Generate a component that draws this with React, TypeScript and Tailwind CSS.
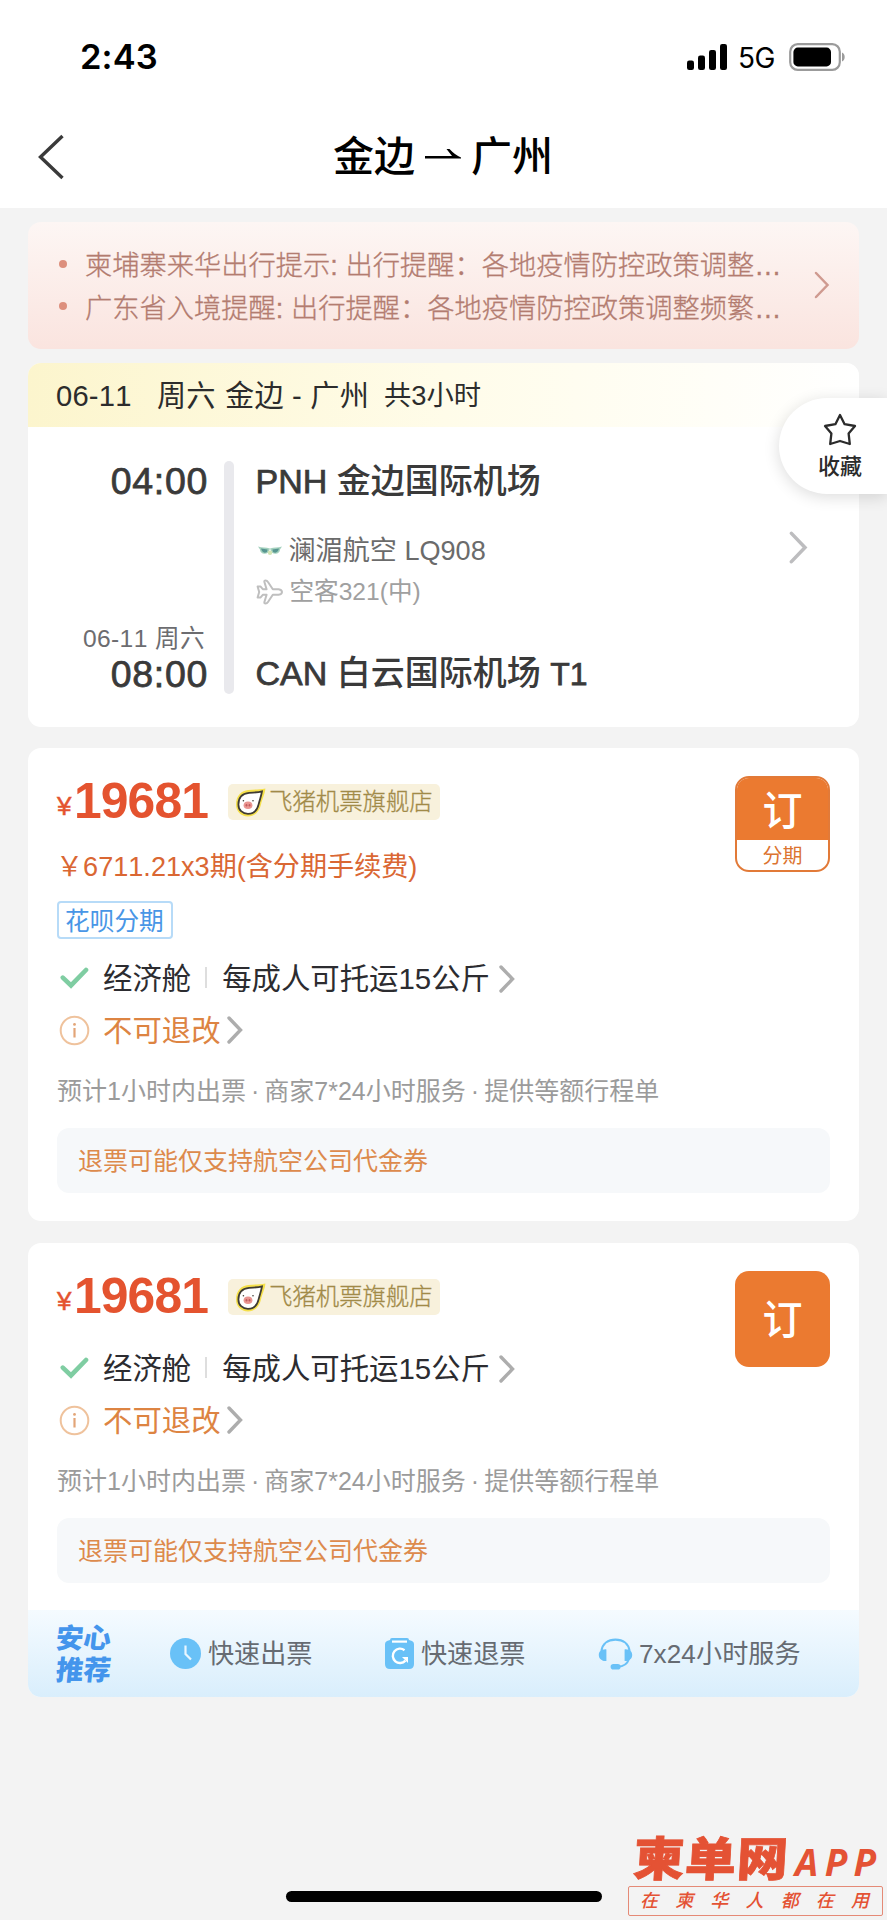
import type { ReactNode } from "react";

function Chevron({ className, stroke, width = 3.4 }: { className: string; stroke: string; width?: number }) {
  return (
    <svg className={className} viewBox="0 0 16 28" fill="none" stroke={stroke} strokeWidth={width} strokeLinecap="round" strokeLinejoin="miter">
      <path d="M2 2 L13.5 14 L2 26" />
    </svg>
  );
}

function StatusBar() {
  return (
    <div className="flex h-[114px] items-center pl-[80px] pr-[42px]">
      <span className="font-['Inter'] text-[34.5px] font-semibold leading-none tracking-[0.1px] text-black">2:43</span>
      <svg className="ml-auto h-[28px] w-[40px]" viewBox="0 0 40 28" fill="#000">
        <rect x="0" y="17.5" width="7" height="9.5" rx="2.2" />
        <rect x="11" y="12.5" width="7" height="14.5" rx="2.2" />
        <rect x="22" y="7" width="7" height="20" rx="2.2" />
        <rect x="33" y="1" width="7" height="26" rx="2.2" />
      </svg>
      <span className="ml-[11px] w-[51px] pt-[2px] font-['Inter'] text-[28px] leading-none tracking-[-0.5px] text-black">5G</span>
      <svg className="h-[28px] w-[56px]" viewBox="0 0 56 28">
        <rect x="1.2" y="1.2" width="49.6" height="25.6" rx="7.5" fill="none" stroke="#9b9b9b" strokeWidth="2.2" />
        <rect x="4.4" y="4.6" width="37.6" height="18.8" rx="4.4" fill="#000" />
        <path d="M53 9.5 C56.6 11 56.6 17 53 18.5 Z" fill="#9b9b9b" />
      </svg>
    </div>
  );
}

function TitleBar() {
  return (
    <div className="grid h-[94px] grid-cols-[333px_1fr] items-center pb-[8px]">
      <svg className="ml-[37px] h-[46px] w-[28px]" viewBox="0 0 28 46" fill="none" stroke="#3a3a3a" strokeWidth="3.4">
        <path d="M25.5 2 L3.5 23 L25.5 44" />
      </svg>
      <div className="flex items-center text-[41px] font-medium leading-[60px] text-black">
        <span>金边</span>
        <svg className="mb-[6px] ml-[10px] mr-[10px] h-[12px] w-[36px]" viewBox="0 0 36 12" fill="#000">
          <path d="M0 8 H27 L21.5 1 L24.5 1 Q30 7 36 9.4 V10.6 H0 Z" />
        </svg>
        <span>广州</span>
      </div>
    </div>
  );
}

function Notice() {
  return (
    <section className="flex h-[127px] items-center rounded-[13px] bg-linear-to-b from-[#fdf6f4] to-[#fae4df] pl-[31px] pr-[27px]">
      <ul className="w-[725px] pt-[4px] text-[27.25px] leading-[42.5px] text-[#b37c70]">
        {["柬埔寨来华出行提示: 出行提醒：各地疫情防控政策调整…", "广东省入境提醒: 出行提醒：各地疫情防控政策调整频繁…"].map((t) => (
          <li key={t} className="flex items-center whitespace-nowrap font-light [-webkit-text-stroke:0.3px_currentColor]">
            <span className="mb-[5px] mr-[18px] size-[8px] rounded-full bg-[#dd8f7d]" />
            {t}
          </li>
        ))}
      </ul>
      <Chevron className="mb-[2px] ml-[30px] h-[28px] w-[16px]" stroke="#cf9a90" width={2.5} />
    </section>
  );
}

function MaskIcon() {
  return (
    <svg className="mr-[7px] h-[10px] w-[24px]" viewBox="0 0 24 10">
      <path d="M0 .6 C4 1.8 8 1.4 12 2.6 L10.4 6.6 C6 9.4 2 7 2 3.6 Z" fill="#a3d0bd" />
      <path d="M24 .6 C20 1.8 16 1.4 12 2.6 L13.6 6.6 C18 9.4 22 7 22 3.6 Z" fill="#a3d0bd" />
      <path d="M3 2.6 L9.6 3.4 L9 6 C6 7.8 4 6 3 2.6 Z M21 2.6 L14.4 3.4 L15 6 C18 7.8 20 6 21 2.6 Z" fill="#569590" />
      <circle cx="12" cy="6.8" r="2.2" fill="#d3e4b4" />
    </svg>
  );
}

function PlaneIcon() {
  return (
    <svg className="mr-[7px] h-[26px] w-[27px]" viewBox="0 0 27 26" fill="none" stroke="#bfbfbf" strokeWidth="2" strokeLinejoin="round">
      <path d="M10.6 10.2 L8.4 3 Q8 1.4 9.6 1.4 Q11 1.4 12 3 L16.8 10.2 H22.6 Q26 10.8 26 13 Q26 15.2 22.6 15.8 H16.8 L12 23 Q11 24.6 9.6 24.6 Q8 24.6 8.4 23 L10.6 15.8 H6.8 L4.4 18.6 H1.6 L3.2 13 L1.6 7.4 H4.4 L6.8 10.2 Z" />
    </svg>
  );
}

const medium = "font-medium [-webkit-text-stroke:0.75px_currentColor]";

function FlightCard() {
  return (
    <section className="mt-[14px] h-[364px] rounded-[13px] bg-white">
      <header className="flex h-[64px] items-center whitespace-pre rounded-t-[13px] bg-linear-to-r from-[#fcf5cd] via-[#fffce9] to-white pl-[28px] pt-[3px] text-[29.2px] text-[#2c2c2c]">
        <span className="w-[101px] tracking-[0.2px]">06-11</span>
        <span className="w-[68px]">周六</span>
        <span className="w-[159px] tracking-[0.2px]">金边 - 广州</span>
        <span className="text-[27.3px]">共3小时</span>
      </header>
      <div className="flex pt-[34px]">
        <div className="flex h-[233px] w-[181px] flex-col items-end text-[#3a3a3a]">
          <span className={`pr-[1px] text-[37.5px] leading-[40px] tracking-[0.7px] ${medium}`}>04:00</span>
          <span className="mt-auto pr-[4px] text-[24.6px] leading-[30px] tracking-[0.4px] text-[#6c6c70]">06-11 周六</span>
          <span className={`pr-[1px] text-[37.5px] leading-[40px] tracking-[0.7px] ${medium}`}>08:00</span>
        </div>
        <div className="ml-[15px] h-[233px] w-[9.5px] rounded-full bg-[#e9e9ed]" />
        <div className="ml-[22px] flex h-[233px] w-[533px] flex-col whitespace-nowrap text-[#3a3a3a]">
          <span className="text-[34px] font-medium leading-[40px]">
            <span className={medium}>PNH</span> 金边国际机场
          </span>
          <span className="mt-[30px] flex items-center pl-[2px] text-[27.1px] leading-[40px] text-[#6b6b6b]">
            <MaskIcon />
            澜湄航空 LQ908
          </span>
          <span className="flex items-center text-[24.6px] leading-[42px] text-[#a0a0a0]">
            <PlaneIcon />
            空客321(中)
          </span>
          <span className="mt-auto text-[34px] font-medium leading-[39px]">
            <span className={medium}>CAN</span> 白云国际机场 <span className={`text-[32px] ${medium}`}>T1</span>
          </span>
        </div>
        <Chevron className="mt-[70px] h-[33px] w-[19px]" stroke="#bdbdbf" width={3} />
      </div>
    </section>
  );
}

function FavoriteTab() {
  return (
    <button className="absolute right-0 top-[398px] flex h-[96px] w-[108px] flex-col items-center rounded-l-full bg-white pl-[14px] pt-[15px] text-[#2b2b2b] shadow-[0_3px_16px_rgba(0,0,0,0.14)]">
      <svg className="h-[33px] w-[34px]" viewBox="0 0 34 33" fill="none" stroke="currentColor" strokeWidth="2.3" strokeLinejoin="round">
        <path d="M17 2 L21.6 11.2 L32 13 L25.6 20.4 L26.8 31 L17 28 L7.2 31 L8.4 20.4 L2 13 L12.4 11.2 Z" />
      </svg>
      <span className="mt-[7px] text-[22px] font-medium leading-[28px]">收藏</span>
    </button>
  );
}

function PigIcon() {
  return (
    <svg className="h-[32px] w-[31px]" viewBox="0 0 31 32">
      <path d="M1 18.5 C1 9 7 4.6 13 4 C20 3.4 25 3.4 30.4 2.4 C30 8 27.4 12 26 18.6 C24.4 26.4 19 30.4 13 30.4 C6 30.4 1 25.4 1 18.5 Z" fill="#f5e04b" />
      <path d="M3.4 18.4 C3.4 11 8 7.4 14 6.8 C19 6.4 23 6.6 27 5.4 C26.4 9.4 24.8 13.4 23.6 18.4 C22.2 24.6 18 27.8 13 27.8 C7.4 27.8 3.4 24 3.4 18.4 Z" fill="#fff" stroke="#3f3b33" strokeWidth="1.8" />
      <ellipse cx="13" cy="19.2" rx="4.4" ry="3.8" fill="#ea9590" />
      <ellipse cx="11.5" cy="19.2" rx=".9" ry="1.3" fill="#c25a5c" />
      <ellipse cx="14.5" cy="19.2" rx=".9" ry="1.3" fill="#c25a5c" />
      <circle cx="8.4" cy="14.8" r=".8" fill="#3f3b33" />
      <circle cx="18" cy="14.8" r=".8" fill="#3f3b33" />
    </svg>
  );
}

function PriceLine() {
  return (
    <div className="flex h-[37px] items-center">
      <span className="w-[17px] pt-[9px] text-[26px] leading-none text-[#e4532f] [-webkit-text-stroke:0.5px_currentColor]">¥</span>
      <span className="w-[154px] pt-px text-[49.8px] font-bold leading-none tracking-[-0.9px] text-[#e4532f]">19681</span>
      <span className="flex h-[36px] w-[212px] items-center rounded-[5px] bg-[#f8f1dc] pl-[7px] text-[23.4px] font-light leading-none text-[#a18a48]">
        <PigIcon />
        <span className="ml-[3px] pt-[2px] [-webkit-text-stroke:0.3px_currentColor]">飞猪机票旗舰店</span>
      </span>
    </div>
  );
}

function OfferDetails() {
  return (
    <>
      <div className="flex h-[53px] items-center text-[29.4px] text-[#2c2c30]">
        <svg className="ml-[3px] mr-[14px] h-[22px] w-[29px]" viewBox="0 0 29 22" fill="none" stroke="#7fcda2" strokeWidth="4.6" strokeLinecap="round">
          <path d="M2.8 10.6 L11 18.4 L26 3" />
        </svg>
        <span className="pt-[3px]">经济舱</span>
        <span className="ml-[14px] mr-[15px] h-[21px] w-[2px] bg-[#dedede]" />
        <span className="pt-[3px]">每成人可托运15公斤</span>
        <Chevron className="ml-[9px] mt-[2px] h-[28px] w-[16px]" stroke="#adadad" />
      </div>
      <div className="flex h-[52px] items-center text-[29.4px] text-[#dd8442]">
        <svg className="ml-[2px] mr-[13px] size-[31px]" viewBox="0 0 31 31" fill="none" stroke="#efc29c" strokeWidth="2">
          <circle cx="15.5" cy="15.5" r="13.8" />
          <path d="M15.5 13 V22.5" stroke="#e3a577" strokeWidth="2.2" />
          <circle cx="15.5" cy="9.4" r="1.4" fill="#e3a577" stroke="none" />
        </svg>
        <span className="pt-[2px]">不可退改</span>
        <Chevron className="ml-[6px] h-[28px] w-[16px]" stroke="#adadad" />
      </div>
      <p className="mt-[15px] h-[40px] whitespace-nowrap text-[25px] leading-[41px] text-[#9b9b9b] [word-spacing:-1.9px]">
        预计1小时内出票 · 商家7*24小时服务 · 提供等额行程单
      </p>
      <p className="mt-[17px] h-[65px] w-[773px] rounded-[12px] bg-[#f6f8fa] pl-[21px] text-[25px] leading-[67px] text-[#dd8a4c]">
        退票可能仅支持航空公司代金券
      </p>
    </>
  );
}

function OfferCard({ className, button, children }: { className: string; button: ReactNode; children: ReactNode }) {
  return (
    <section className={`grid grid-cols-[678px_95px] content-start rounded-[13px] bg-white pl-[29px] pt-[28px] ${className}`}>
      <div className="pt-[7px]">{children}</div>
      {button}
    </section>
  );
}

function SafeStrip() {
  return (
    <footer className="-ml-[29px] mt-[27px] flex h-[87px] w-[831px] items-center rounded-b-[13px] bg-linear-to-b from-[#f5fbff] to-[#d9eefc] text-[26.1px] text-[#666b72]">
      <div className="ml-[28px] w-[114px] pt-[3px] text-[27.5px] font-extrabold leading-[32px] text-[#4495ec]">
        <div className="-skew-x-6">安心</div>
        <div className="-skew-x-6">推荐</div>
      </div>
      <svg className="mr-[7px] size-[31px]" viewBox="0 0 31 31">
        <circle cx="15.5" cy="15.5" r="15.5" fill="#69c1f7" />
        <path d="M15.5 7.5 V16 L21 21.5" fill="none" stroke="#e8f6ff" strokeWidth="2.2" />
      </svg>
      <span className="w-[177px] pt-[3px]">快速出票</span>
      <svg className="mr-[7px] h-[31px] w-[29px]" viewBox="0 0 29 31">
        <path d="M5 2 Q5 0 7 0 H22 Q24 0 24 2 L27 3 Q29 4 29 6 V26 Q29 31 24 31 H5 Q0 31 0 26 V6 Q0 4 2 3 Z" fill="#69c1f7" />
        <path d="M7 3.6 H22" stroke="#fff" strokeWidth="2.2" />
        <path d="M19.5 12.2 A7.2 7.2 0 1 0 20.4 22.6" fill="none" stroke="#fff" strokeWidth="2.4" />
        <path d="M17 19 H23 V25 Z" fill="#fff" />
      </svg>
      <span className="w-[177px] pt-[3px]">快速退票</span>
      <svg className="mr-[6px] h-[32px] w-[35px]" viewBox="0 0 35 32" fill="none" stroke="#69c1f7" strokeWidth="2.1">
        <path d="M3.4 13 C4.4 5.6 10 1.6 17.5 1.6 C25 1.6 30.6 5.6 31.6 13" />
        <path d="M8.4 11.4 V23 C3 23.4 .8 20 .8 17 C.8 14 3 11 8.4 11.4 Z M26.6 11.4 V23 C32 23.4 34.2 20 34.2 17 C34.2 14 32 11 26.6 11.4 Z" fill="#69c1f7" stroke="none" />
        <path d="M31 21 C29 26.6 25.6 28.6 20 28.8" />
        <rect x="12.6" y="26" width="10" height="5.6" rx="2.8" fill="#69c1f7" stroke="none" />
      </svg>
      <span className="pt-[3px] tracking-[0.1px]">7x24小时服务</span>
    </footer>
  );
}

function Brand() {
  return (
    <div className="flex w-[256px] flex-col text-[#e45234]">
      <div className="flex h-[52px] items-end">
        <span className="ml-[4px] w-[163px] origin-bottom -skew-x-3 scale-y-92 whitespace-nowrap text-[51px] font-black leading-[50px] tracking-[0.8px] [-webkit-text-stroke:0.8px_currentColor]">柬单网</span>
        <span className="-mb-px font-['Open_Sans'] text-[37px] font-bold italic leading-[44px] tracking-[6.4px]">APP</span>
      </div>
      <div className="mt-[3px] flex h-[30px] w-[255px] items-center justify-between rounded-[2px] border border-[#e58a76] pl-[11px] pr-[13px] text-[18px] font-medium italic leading-none">
        {"在柬华人都在用".split("").map((c, i) => (
          <span key={i}>{c}</span>
        ))}
      </div>
    </div>
  );
}

export default function App() {
  return (
    <div className="relative flex h-[1920px] w-[887px] flex-col overflow-hidden bg-[#f3f3f3] font-['Liberation_Sans','Noto_Sans_CJK_SC',sans-serif] [font-kerning:none]">
      <div className="bg-white">
        <StatusBar />
        <TitleBar />
      </div>
      <main className="mx-[28px] mt-[14px]">
        <Notice />
        <FlightCard />
        <OfferCard
          className="mt-[21px] h-[473px]"
          button={
            <button className="flex h-[96px] w-[95px] flex-col overflow-hidden rounded-[14px] border-[2.5px] border-[#e27a38] bg-white text-center">
              <span className="h-[62px] bg-[#eb7a30] text-[40px] font-medium leading-[67px] text-white">订</span>
              <span className="text-[20px] leading-[32px] text-[#dc7431]">分期</span>
            </button>
          }
        >
          <PriceLine />
          <p className="-ml-px mt-[24px] h-[44px] whitespace-nowrap text-[27.1px] leading-[45px] text-[#da6733]">￥6711.21x3期(含分期手续费)</p>
          <p className="mb-[12px] mt-[13px] h-[38px] w-[116px] rounded-[4px] border-2 border-[#b7dbf8] pl-[6px] text-[24.7px] leading-[37px] text-[#4896e6]">花呗分期</p>
          <OfferDetails />
        </OfferCard>
        <OfferCard
          className="mt-[22px] h-[454px]"
          button={<button className="h-[96px] w-[95px] rounded-[14px] bg-[#eb7a30] text-[40px] font-medium leading-[98px] text-white">订</button>}
        >
          <PriceLine />
          <div className="h-[26px]" />
          <OfferDetails />
          <SafeStrip />
        </OfferCard>
      </main>
      <FavoriteTab />
      <div className="mt-auto flex items-end pb-[4px] pl-[286px]">
        <div className="mb-[14px] mr-[26px] h-[11px] w-[316px] shrink-0 rounded-full bg-black" />
        <Brand />
      </div>
    </div>
  );
}
